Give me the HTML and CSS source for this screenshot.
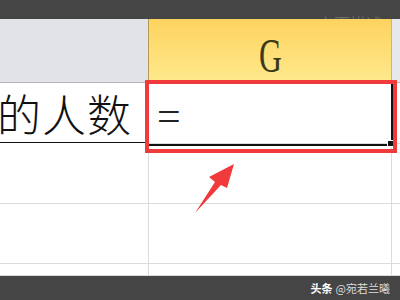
FILE: index.html
```html
<!DOCTYPE html>
<html>
<head>
<meta charset="utf-8">
<link rel="stylesheet" href="styles.css">
</head>
<body>
<div class="screen">
  <div class="topbar"><span class="ghost">上面描述</span></div>
  <div class="sheet">
    <div class="hcell hleft"></div>
    <div class="hcell hsel"><span class="colname">G</span></div>
    <div class="hcell hright"></div>

    <div class="cell c1 r1"><span class="big">的人数</span></div>
    <div class="cell c2 r1"><span class="eq">=</span></div>
    <div class="cell c3 r1"></div>

    <div class="cell c1"></div>
    <div class="cell c2"></div>
    <div class="cell c3"></div>

    <div class="cell c1"></div>
    <div class="cell c2"></div>
    <div class="cell c3"></div>

    <div class="cell c1"></div>
    <div class="cell c2"></div>
    <div class="cell c3"></div>
  </div>
  <div class="bottombar"><span class="brand">头条</span><span class="author">@宛若兰曦</span></div>

  <div class="selection"><span class="handle"></span></div>
  <div class="redbox"></div>
  <svg class="arrow" width="400" height="300" viewBox="0 0 400 300">
    <polygon points="195,213 215,182 209,177 234,164 227,188 221,185" fill="#f03a3c"/>
  </svg>
</div>
</body>
</html>
```
FILE: styles.css
```css
html, body {
  margin: 0;
  padding: 0;
  background: #ffffff;
}
.screen {
  position: relative;
  width: 400px;
  height: 300px;
  overflow: hidden;
  display: flex;
  flex-direction: column;
}
.topbar {
  height: 19px;
  background: #454545;
  overflow: hidden;
  display: flex;
  justify-content: flex-end;
  padding-right: 18px;
  box-sizing: border-box;
}
.ghost {
  font-family: "Noto Sans CJK SC", sans-serif;
  font-size: 16px;
  line-height: 16px;
  color: #6a6a6a;
  padding-top: 15px;
}
.sheet {
  display: grid;
  grid-template-columns: 149px 243px 8px;
  grid-template-rows: 64px 61px 60px 60px 12px;
  flex: 0 0 257px;
  overflow: hidden;
}
.hcell {
  box-sizing: border-box;
  border-bottom: 1px solid #b4b6b8;
}
.hleft {
  background: #e1e3e7;
  border-right: 1px solid #b49a5a;
}
.hsel {
  background: linear-gradient(#fdd35f, #fee98c);
  border-right: 1px solid #c9b77a;
  display: flex;
  justify-content: center;
  align-items: center;
  padding-top: 10px;
}
.hright {
  background: #e6e8ec;
}
.colname {
  display: inline-block;
  font-family: "Liberation Serif", serif;
  font-size: 48px;
  line-height: 40px;
  color: #3a3a18;
  transform: scaleX(0.66);
}
.cell {
  box-sizing: border-box;
  border-bottom: 1px solid #dcdcdc;
  border-right: 1px solid #dcdcdc;
}
.c3 {
  border-right: none;
}
.r1.c1 {
  border-bottom: 1px solid #111111;
  margin-bottom: 1px;
  display: flex;
  align-items: center;
  justify-content: flex-end;
  overflow: hidden;
  padding-right: 16px;
  white-space: nowrap;
}
.big {
  font-family: "Noto Sans CJK SC", sans-serif;
  font-size: 44px;
  line-height: 44px;
  color: #111111;
  letter-spacing: 1px;
  font-weight: 300;
}
.r1.c2 {
  display: flex;
  align-items: center;
  padding-left: 8px;
  padding-top: 6px;
}
.eq {
  font-family: "Liberation Serif", serif;
  font-size: 42px;
  line-height: 42px;
  color: #222222;
}
.bottombar {
  flex: 1;
  background: #454545;
  display: flex;
  justify-content: flex-end;
  align-items: center;
  padding-right: 10px;
  gap: 3px;
  font-family: "Noto Sans CJK SC", sans-serif;
  font-size: 11px;
}
.brand {
  color: #ffffff;
  font-weight: bold;
}
.author {
  color: #dddddd;
}
.selection {
  position: absolute;
  left: 147px;
  top: 82px;
  width: 246px;
  height: 64px;
  box-sizing: border-box;
  border: 2px solid #111111;
}
.handle {
  position: absolute;
  right: -3px;
  bottom: -3px;
  width: 5px;
  height: 5px;
  background: #111111;
  border: 1px solid #ffffff;
}
.redbox {
  position: absolute;
  left: 145px;
  top: 80px;
  width: 252px;
  height: 73px;
  box-sizing: border-box;
  border: 4px solid #f03a3c;
}
.arrow {
  position: absolute;
  left: 0;
  top: 0;
}
```
